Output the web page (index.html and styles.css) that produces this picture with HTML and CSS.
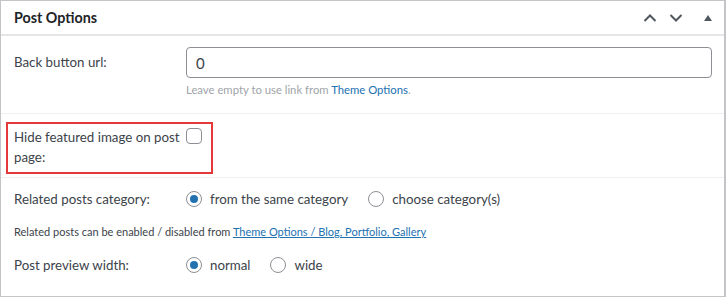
FILE: index.html
```html
<!DOCTYPE html>
<html lang="en">
<head>
  <meta charset="UTF-8">
  <title>Post Options</title>
  <link rel="stylesheet" href="styles.css">
</head>
<body>
  <div class="postbox">
    <div class="postbox-header">
      <h2>Post Options</h2>
      <div class="handle-actions">
        <button class="handle-btn" aria-label="Move up">
          <svg width="14" height="10" viewBox="0 0 14 10"><path d="M1.5 8 L7 2.5 L12.5 8" fill="none" stroke="#50575e" stroke-width="2"/></svg>
        </button>
        <button class="handle-btn" aria-label="Move down">
          <svg width="14" height="10" viewBox="0 0 14 10"><path d="M1.5 2 L7 7.5 L12.5 2" fill="none" stroke="#50575e" stroke-width="2"/></svg>
        </button>
        <button class="handle-btn toggle" aria-label="Toggle panel">
          <svg width="8" height="6" viewBox="0 0 8 6"><path d="M4 0 L8 6 L0 6 Z" fill="#50575e"/></svg>
        </button>
      </div>
    </div>

    <div class="option-row">
      <label class="option-label" for="back-url">Back button url:</label>
      <div class="option-field">
        <input type="text" id="back-url" class="text-input" value="0">
        <p class="help">Leave empty to use link from <a href="#">Theme Options</a>.</p>
      </div>
    </div>

    <div class="option-row marked">
      <div class="highlight">
        <label class="option-label wrap" for="hide-image">Hide featured image on post page:</label>
        <input type="checkbox" id="hide-image" class="check">
      </div>
    </div>

    <div class="option-row plain">
      <span class="option-label">Related posts category:</span>
      <div class="choices">
        <label class="choice"><input type="radio" name="related" class="radio" checked> from the same category</label>
        <label class="choice"><input type="radio" name="related" class="radio"> choose category(s)</label>
      </div>
    </div>

    <p class="note">Related posts can be enabled / disabled from <a href="#">Theme Options / Blog, Portfolio, Gallery</a></p>

    <div class="option-row plain last">
      <span class="option-label">Post preview width:</span>
      <div class="choices">
        <label class="choice"><input type="radio" name="preview" class="radio" checked> normal</label>
        <label class="choice"><input type="radio" name="preview" class="radio"> wide</label>
      </div>
    </div>
  </div>
</body>
</html>
```

FILE: styles.css
```css
:root {
  --text: #3c434a;
  --muted: #a0a5aa;
  --border: #c3c4c7;
  --line: #f0f0f1;
  --field-border: #8c8f94;
  --blue: #2271b1;
  --mark: #e5383b;
}

* {
  margin: 0;
  padding: 0;
  box-sizing: border-box;
}

body {
  font-family: Lato, "Noto Sans", sans-serif;
  font-size: 13.3px;
  color: var(--text);
  background: #fff;
}

.postbox {
  width: 726px;
  height: 297px;
  border: 1px solid var(--border);
  border-right-width: 2px;
  background: #fff;
}

.postbox-header {
  height: 35px;
  display: flex;
  align-items: center;
  justify-content: space-between;
  padding: 0 12px 0 13px;
  border-bottom: 2px solid #e6e6e7;
}

.postbox-header h2 {
  font-size: 14.3px;
  font-weight: 700;
  color: #1d2327;
}

.handle-actions {
  display: flex;
  align-items: center;
  gap: 12px;
}

.handle-btn {
  background: none;
  border: none;
  width: 14px;
  height: 14px;
  display: flex;
  align-items: center;
  justify-content: center;
}

.handle-btn.toggle {
  margin-left: 9px;
  width: 8px;
}

.option-row {
  display: flex;
  align-items: flex-start;
  padding: 11px 13px 14px;
  border-bottom: 1px solid var(--line);
}

.option-label {
  width: 172px;
  flex: none;
  line-height: 31px;
}

.option-field {
  flex: 1;
}

.text-input {
  width: 526px;
  height: 31px;
  border: 1px solid var(--field-border);
  border-radius: 4px;
  padding: 0 9px;
  font: inherit;
  font-size: 15px;
  color: var(--text);
}

.help {
  margin-top: 3px;
  font-size: 11.3px;
  line-height: 18px;
  color: var(--muted);
}

.help a {
  color: var(--blue);
  text-decoration: none;
}

.marked {
  padding: 8px 0 3px 5px;
}

.highlight {
  display: flex;
  align-items: flex-start;
  width: 207px;
  border: 2px solid var(--mark);
  padding: 3px 0 5px 6px;
}

.option-label.wrap {
  line-height: 20px;
}

.check {
  appearance: none;
  width: 16px;
  height: 16px;
  margin-top: 1px;
  border: 1px solid var(--field-border);
  border-radius: 4px;
  background: #fff;
}

.plain {
  border-bottom: none;
  padding: 11px 13px 0;
}

.plain .option-label {
  line-height: 20px;
}

.choices {
  display: flex;
  gap: 20px;
}

.choice {
  display: flex;
  align-items: center;
  gap: 8px;
  line-height: 20px;
}

.radio {
  appearance: none;
  width: 16px;
  height: 16px;
  border: 1px solid var(--field-border);
  border-radius: 50%;
  background: #fff;
  display: grid;
  place-items: center;
}

.radio:checked::before {
  content: "";
  width: 8px;
  height: 8px;
  border-radius: 50%;
  background: var(--blue);
}

.note {
  padding: 14px 13px 0;
  font-size: 11px;
  line-height: 18px;
}

.note a {
  color: var(--blue);
}

.last {
  padding-top: 14px;
}
```
